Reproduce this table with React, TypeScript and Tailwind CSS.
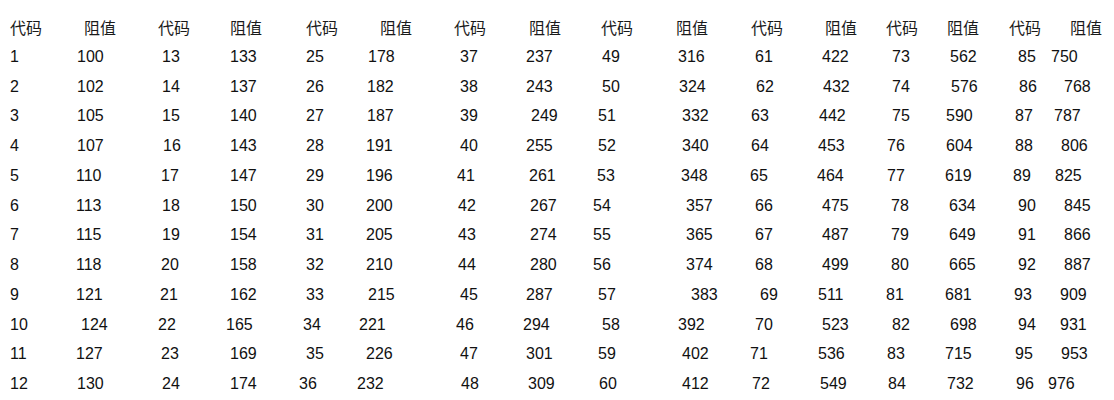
const header = ["代码", "阻值", "代码", "阻值", "代码", "阻值", "代码", "阻值", "代码", "阻值", "代码", "阻值", "代码", "阻值", "代码", "阻值"];
const headerX = [11, 85, 159, 231, 307, 381, 455, 530, 602, 677, 752, 826, 887, 948, 1010, 1071];

// each row: [text, left x of glyph] as it sits in the scanned table
const rows: [string, number][][] = [
  [["1", 10], ["100", 77], ["13", 162], ["133", 230], ["25", 306], ["178", 368], ["37", 460], ["237", 526], ["49", 602], ["316", 678], ["61", 755], ["422", 822], ["73", 892], ["562", 950], ["85", 1018], ["750", 1051]],
  [["2", 10], ["102", 77], ["14", 162], ["137", 230], ["26", 306], ["182", 367], ["38", 460], ["243", 526], ["50", 602], ["324", 679], ["62", 756], ["432", 823], ["74", 892], ["576", 951], ["86", 1019], ["768", 1064]],
  [["3", 10], ["105", 77], ["15", 162], ["140", 230], ["27", 306], ["187", 367], ["39", 460], ["249", 531], ["51", 598], ["332", 682], ["63", 751], ["442", 819], ["75", 892], ["590", 946], ["87", 1015], ["787", 1054]],
  [["4", 10], ["107", 77], ["16", 163], ["143", 230], ["28", 306], ["191", 366], ["40", 460], ["255", 526], ["52", 598], ["340", 682], ["64", 751], ["453", 818], ["76", 887], ["604", 946], ["88", 1015], ["806", 1061]],
  [["5", 10], ["110", 76], ["17", 161], ["147", 230], ["29", 306], ["196", 366], ["41", 457], ["261", 529], ["53", 597], ["348", 681], ["65", 750], ["464", 817], ["77", 887], ["619", 945], ["89", 1013], ["825", 1055]],
  [["6", 10], ["113", 76], ["18", 162], ["150", 230], ["30", 306], ["200", 366], ["42", 458], ["267", 530], ["54", 593], ["357", 686], ["66", 755], ["475", 822], ["78", 891], ["634", 949], ["90", 1018], ["845", 1064]],
  [["7", 10], ["115", 76], ["19", 162], ["154", 230], ["31", 306], ["205", 366], ["43", 458], ["274", 530], ["55", 593], ["365", 686], ["67", 755], ["487", 822], ["79", 891], ["649", 949], ["91", 1018], ["866", 1064]],
  [["8", 10], ["118", 76], ["20", 161], ["158", 230], ["32", 306], ["210", 366], ["44", 458], ["280", 530], ["56", 593], ["374", 686], ["68", 755], ["499", 822], ["80", 891], ["665", 949], ["92", 1018], ["887", 1064]],
  [["9", 10], ["121", 76], ["21", 160], ["162", 230], ["33", 306], ["215", 368], ["45", 460], ["287", 526], ["57", 598], ["383", 691], ["69", 760], ["511", 818], ["81", 886], ["681", 945], ["93", 1014], ["909", 1060]],
  [["10", 10], ["124", 81], ["22", 158], ["165", 226], ["34", 303], ["221", 359], ["46", 456], ["294", 523], ["58", 602], ["392", 678], ["70", 755], ["523", 822], ["82", 892], ["698", 950], ["94", 1018], ["931", 1060]],
  [["11", 10], ["127", 76], ["23", 161], ["169", 230], ["35", 306], ["226", 366], ["47", 460], ["301", 526], ["59", 598], ["402", 682], ["71", 750], ["536", 818], ["83", 887], ["715", 945], ["95", 1015], ["953", 1061]],
  [["12", 10], ["130", 77], ["24", 162], ["174", 230], ["36", 299], ["232", 357], ["48", 461], ["309", 528], ["60", 599], ["412", 682], ["72", 752], ["549", 820], ["84", 888], ["732", 947], ["96", 1016], ["976", 1048]],
];

function Row({ cells, className }: { cells: [string, number][]; className: string }) {
  return (
    <div className={className}>
      {cells.map(([text, x], i) => {
        const next = i + 1 < cells.length ? cells[i + 1][1] : 1114;
        return (
          <span
            key={i}
            className="shrink-0 whitespace-nowrap"
            style={{ width: next - x, marginLeft: i === 0 ? x : 0 }}
          >
            {text}
          </span>
        );
      })}
    </div>
  );
}

export default function App() {
  return (
    <div className="w-[1114px] h-[400px] overflow-hidden bg-white text-[#111] text-[16px] font-['Liberation_Sans','Noto_Sans_CJK_SC',sans-serif] pt-[11px]">
      <Row
        cells={header.map((h, i) => [h, headerX[i] - 1] as [string, number])}
        className="flex h-[31px] items-center leading-none font-['Noto_Sans_CJK_SC','Liberation_Sans',sans-serif] text-[#1a1a1a]"
      />
      {rows.map((r, i) => (
        <Row key={i} cells={r} className="flex h-[29.75px] items-center leading-none" />
      ))}
    </div>
  );
}
